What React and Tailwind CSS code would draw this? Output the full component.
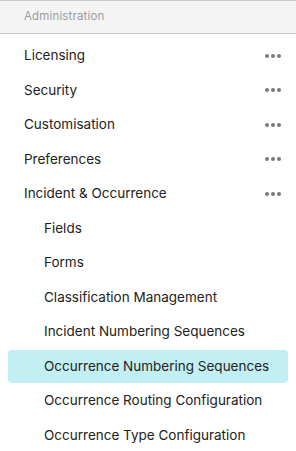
const topItems = ["Licensing", "Security", "Customisation", "Preferences", "Incident & Occurrence"];
const subItems = [
  "Fields",
  "Forms",
  "Classification Management",
  "Incident Numbering Sequences",
  "Occurrence Numbering Sequences",
  "Occurrence Routing Configuration",
  "Occurrence Type Configuration",
];
const ACTIVE = "Occurrence Numbering Sequences";

function Dots() {
  return (
    <div className="flex items-center gap-[2px] mr-[15px]">
      <span className="w-[4px] h-[4px] rounded-full bg-[#7a7a7a]" />
      <span className="w-[4px] h-[4px] rounded-full bg-[#7a7a7a]" />
      <span className="w-[4px] h-[4px] rounded-full bg-[#7a7a7a]" />
    </div>
  );
}

export default function App() {
  return (
    <div
      className="w-[296px] h-[451px] bg-white overflow-hidden text-[#222]"
      style={{ fontFamily: "Inter, 'Noto Sans', sans-serif" }}
    >
      <div className="h-[34px] border-t border-b border-[#c8cbcf] bg-[#f4f4f4] flex items-center pl-[24px] text-[11.5px] tracking-[0.15px] text-[#9c9c9c]">
        Administration
      </div>
      <div className="flex flex-col gap-[1.5px] mt-[5px]">
        {topItems.map((t) => (
          <div key={t} className="h-[33px] flex items-center justify-between pl-[24px] text-[13.5px]">
            <span>{t}</span>
            <Dots />
          </div>
        ))}
        {subItems.map((t) => (
          <div
            key={t}
            className={`h-[33px] flex items-center mx-[8px] pl-[36px] text-[13.5px] rounded-[4px] ${
              t === ACTIVE ? "bg-[#c2eff3]" : ""
            }`}
          >
            {t}
          </div>
        ))}
      </div>
    </div>
  );
}
